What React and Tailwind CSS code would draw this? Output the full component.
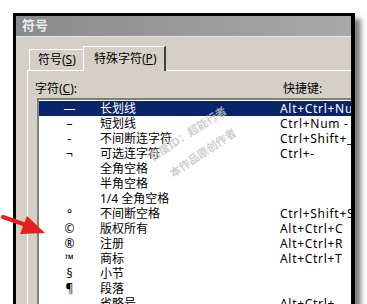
import React from 'react'

const rows = [
  { sym: '—', name: '长划线', key: 'Alt+Ctrl+Num -' },
  { sym: '–', name: '短划线', key: 'Ctrl+Num -' },
  { sym: '-', name: '不间断连字符', key: 'Ctrl+Shift+_' },
  { sym: '¬', name: '可选连字符', key: 'Ctrl+-' },
  { sym: '', name: '全角空格', key: '' },
  { sym: '', name: '半角空格', key: '' },
  { sym: '', name: '1/4 全角空格', key: '' },
  { sym: '°', name: '不间断空格', key: 'Ctrl+Shift+Space' },
  { sym: '©', name: '版权所有', key: 'Alt+Ctrl+C' },
  { sym: '®', name: '注册', key: 'Alt+Ctrl+R' },
  { sym: '™', name: '商标', key: 'Alt+Ctrl+T' },
  { sym: '§', name: '小节', key: '' },
  { sym: '¶', name: '段落', key: '' },
  { sym: '…', name: '省略号', key: 'Alt+Ctrl+.' },
]

const App = () => {
  return (
    <div className='relative w-[367px] h-[304px] overflow-hidden bg-white pt-[13px] pl-[13px] text-[12px] text-black font-["Noto_Sans","Noto_Sans_CJK_SC",sans-serif]'>
      <div className='w-[342px] h-[320px] overflow-hidden border-t-[3px] border-l-[3px] border-r-[4px] border-black bg-[#d4d0c8] shadow-[6px_6px_5px_rgba(0,0,0,0.5)]'>

        {/* title bar */}
        <div className='h-[20px] flex items-center pl-[6px] bg-gradient-to-r from-[#8a8a8a] to-[#a9a9a9] text-[13px] font-bold text-[#ececec]'>
          符号
        </div>

        <div className='pl-[11px] pt-[9px] border-t border-[#e4e2dc]'>
          {/* tabs */}
          <div className='flex items-end'>
            <div className='ml-[2px] w-[54px] h-[21px] flex items-center pl-[8px] border-t border-l border-white'>
              符号(<span className='underline'>S</span>)
            </div>
            <div className='relative z-10 -mb-px w-[83px] h-[25px] flex items-center pl-[10px] border-t border-l border-white border-r-2 border-r-[#404040] bg-[#d4d0c8]'>
              特殊字符(<span className='underline'>P</span>)
            </div>
          </div>

          {/* panel */}
          <div className='w-[400px] border-t border-l border-white pl-[7px] pt-[10px]'>
            <div className='flex h-[15px] items-center leading-none'>
              <span className='w-[248px]'>字符(<span className='underline'>C</span>):</span>
              <span>快捷键:</span>
            </div>

            <div className='mt-[2px] ml-[2px] border-t-2 border-l-2 border-t-[#808080] border-l-[#808080] bg-white pt-px'>
              {rows.map((r, i) => (
                <div key={i} className={'flex h-[15px] items-center whitespace-nowrap leading-none ' + (i === 0 ? 'bg-[#0a246a] text-white' : '')}>
                  <span className='w-[61px] text-center'>{r.sym}</span>
                  <span className='w-[180px]'>{r.name}</span>
                  <span className='tracking-[0.7px]'>{r.key}</span>
                </div>
              ))}
            </div>
          </div>
        </div>
      </div>

      {/* watermark */}
      <div className='absolute left-[188px] top-[134px] -translate-x-1/2 -translate-y-1/2 -rotate-[33deg] whitespace-nowrap text-[11px] font-bold text-[#c4c4c4] opacity-80'>
        百度ID：超能行者
      </div>
      <div className='absolute left-[203px] top-[153px] -translate-x-1/2 -translate-y-1/2 -rotate-[34deg] whitespace-nowrap text-[11px] font-bold text-[#c4c4c4] opacity-80'>
        本作品原创作者
      </div>

      {/* red arrow */}
      <svg className='absolute left-0 top-[210px]' width='50' height='30' viewBox='0 210 50 30'>
        <line x1='3' y1='217' x2='26' y2='225' stroke='#e3201b' strokeWidth='4' strokeLinecap='round' />
        <polygon points='45,233 27,216 20,234' fill='#e3201b' />
      </svg>
    </div>
  )
}

export default App
